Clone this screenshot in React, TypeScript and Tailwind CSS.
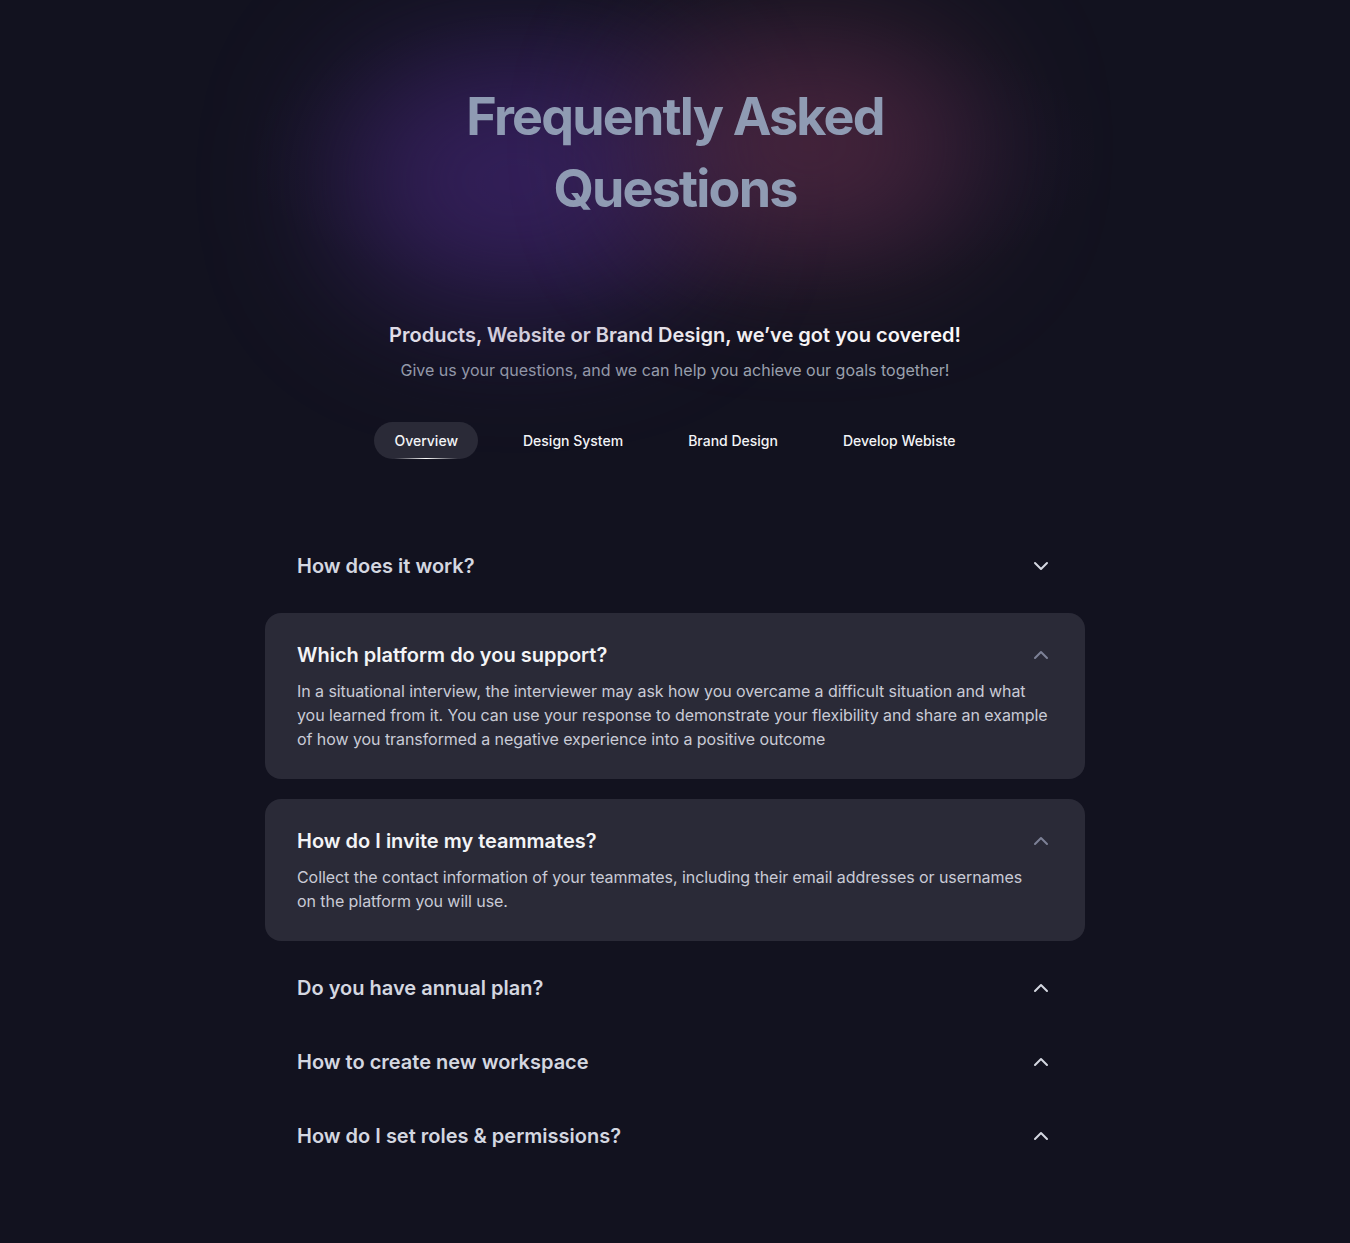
import React, { useState } from 'react';
import { ChevronDown, ChevronUp } from 'lucide-react';

const TABS = ['Overview', 'Design System', 'Brand Design', 'Develop Webiste'];

type Faq = { q: string; a: React.ReactNode; open: boolean; up: boolean };

const FAQS: Faq[] = [
  { q: 'How does it work?', a: '', open: false, up: false },
  {
    q: 'Which platform do you support?',
    a: (
      <>
        In a situational interview, the interviewer may ask how you overcame a difficult situation and what
        <br />
        you learned from it. You can use your response to demonstrate your flexibility and share an example
        <br />
        of how you transformed a negative experience into a positive outcome
      </>
    ),
    open: true,
    up: true,
  },
  {
    q: 'How do I invite my teammates?',
    a: (
      <>
        Collect the contact information of your teammates, including their email addresses or usernames
        <br />
        on the platform you will use.
      </>
    ),
    open: true,
    up: true,
  },
  { q: 'Do you have annual plan?', a: '', open: false, up: true },
  { q: 'How to create new workspace', a: '', open: false, up: true },
  { q: 'How do I set roles & permissions?', a: '', open: false, up: true },
];

export default function App() {
  const [tab, setTab] = useState('Overview');

  return (
    <div className="min-h-screen bg-[#12121f] font-['Inter',sans-serif] text-white">
      {/* Header */}
      <div className="relative flex flex-col items-center pt-[81px]">
        <div className="pointer-events-none absolute left-1/2 top-0 h-[310px] w-[840px] -translate-x-1/2 rounded-full bg-[radial-gradient(ellipse_at_center,#1e1834_0%,#181428_45%,transparent_72%)]" />
        <div className="pointer-events-none absolute left-[340px] top-[60px] h-[240px] w-[350px] rounded-full bg-[#3a2266] opacity-80 blur-[70px]" />
        <div className="pointer-events-none absolute left-[650px] top-[40px] h-[210px] w-[320px] rounded-full bg-[#5a2b42] opacity-70 blur-[70px]" />
        <h1 className="relative text-center text-[52px] font-bold leading-[72px] tracking-[-0.035em] text-[#8f9bb3]">
          Frequently Asked
          <br />
          Questions
        </h1>
      </div>

      {/* Intro */}
      <div className="mt-[96px] flex flex-col items-center">
        <h2 className="text-[20px] font-semibold leading-7 text-white">
          Products, Website or Brand Design, we’ve got you covered!
        </h2>
        <p className="mt-[9px] text-base leading-6 text-[#9ca3af]">
          Give us your questions, and we can help you achieve our goals together!
        </p>

        <div className="mt-10 flex items-center gap-[25px]">
          {TABS.map((t) => (
            <button
              key={t}
              onClick={() => setTab(t)}
              className={`relative h-[37px] rounded-full px-5 text-sm font-medium text-[#f3f4f6] ${
                tab === t ? 'bg-[#2a2a37]' : ''
              }`}
            >
              {t}
              {tab === t && (
                <span className="absolute bottom-0 left-1/2 h-px w-[64px] -translate-x-1/2 bg-[linear-gradient(90deg,transparent,#ffffff,transparent)]" />
              )}
            </button>
          ))}
        </div>
      </div>

      {/* FAQ list */}
      <div className="mx-auto mt-[80px] flex w-[820px] flex-col gap-5 pb-[80px]">
        {FAQS.map((f) =>
          f.open ? (
            <div key={f.q} className="rounded-2xl bg-[#2a2a37] px-8 py-7">
              <div className="flex items-center justify-between">
                <h3 className="text-[20px] font-semibold leading-7 text-[#f3f4f6]">{f.q}</h3>
                <ChevronUp size={24} strokeWidth={2} className="text-[#7d8196]" />
              </div>
              <p className="mt-[10px] text-base leading-6 tracking-[-0.004em] text-[#c9cbd6]">{f.a}</p>
            </div>
          ) : (
            <div key={f.q} className="flex h-[54px] items-center justify-between px-8">
              <h3 className="text-[20px] font-semibold leading-7 text-[#d4d7e0]">{f.q}</h3>
              {f.up ? (
                <ChevronUp size={24} strokeWidth={2} className="text-[#d4d7e0]" />
              ) : (
                <ChevronDown size={24} strokeWidth={2} className="text-[#d4d7e0]" />
              )}
            </div>
          )
        )}
      </div>
    </div>
  );
}
